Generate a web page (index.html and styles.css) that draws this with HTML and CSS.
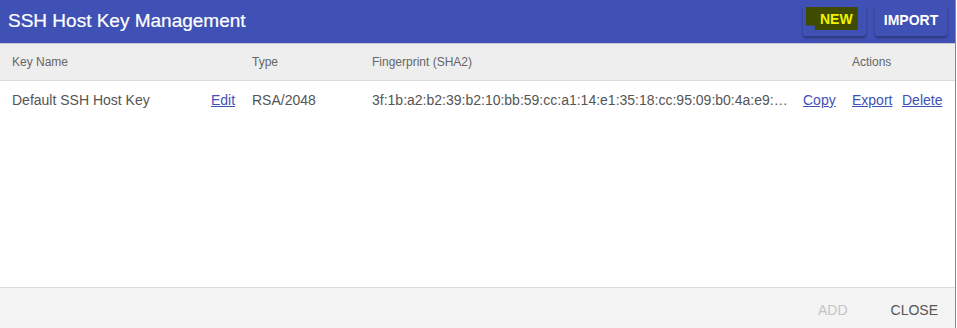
FILE: index.html
```html
<!DOCTYPE html>
<html lang="en">
<head>
    <meta charset="UTF-8">
    <title>SSH Host Key Management</title>
    <link rel="stylesheet" href="styles.css">
</head>
<body>
    <div class="dialog">
        <div class="dialog-header">
            <h1>SSH Host Key Management</h1>
            <div class="header-buttons">
                <button class="btn-new"><span class="marker">NEW</span></button>
                <button class="btn-import">IMPORT</button>
            </div>
        </div>

        <div class="dialog-body">
            <div class="row head">
                <span>Key Name</span>
                <span></span>
                <span>Type</span>
                <span>Fingerprint (SHA2)</span>
                <span></span>
                <span>Actions</span>
                <span></span>
            </div>
            <div class="row">
                <span>Default SSH Host Key</span>
                <a href="#">Edit</a>
                <span>RSA/2048</span>
                <span class="fingerprint">3f:1b:a2:b2:39:b2:10:bb:59:cc:a1:14:e1:35:18:cc:95:09:b0:4a:e9:…</span>
                <a href="#">Copy</a>
                <a href="#">Export</a>
                <a href="#">Delete</a>
            </div>
        </div>

        <div class="dialog-footer">
            <button class="flat disabled">ADD</button>
            <button class="flat">CLOSE</button>
        </div>
    </div>
</body>
</html>
```

FILE: styles.css
```css
:root {
    --primary-color: #3f51b5;
    --text-color: #555;
    --head-color: #666;
}

body {
    margin: 0;
    background: white;
    font-family: "Liberation Sans", Arial, sans-serif;
}

.dialog {
    width: 955px;
    height: 328px;
    border-right: 1px solid #8a8a8a;
    display: flex;
    flex-direction: column;
}

.dialog-header {
    height: 43px;
    background-color: var(--primary-color);
    border-bottom: 1px solid #c8c8d0;
    display: flex;
    align-items: center;
    justify-content: space-between;
    padding: 0 8px;
}

.dialog-header h1 {
    margin: 0;
    color: white;
    font-size: 19px;
    font-weight: normal;
    margin-top: -2px;
    -webkit-text-stroke: 0.2px white;
}

.header-buttons {
    display: flex;
    gap: 9px;
    margin-top: -3px;
}

.header-buttons button {
    height: 31px;
    background-color: var(--primary-color);
    color: white;
    border: none;
    border-radius: 3px;
    box-shadow: 0 2px 3px rgba(0, 0, 0, 0.35);
    font-family: inherit;
    font-size: 14px;
    font-weight: bold;
    cursor: pointer;
}

.btn-new {
    width: 63px;
    padding: 0 0 0 3px;
    display: flex;
    align-items: center;
}

.btn-import {
    width: 72px;
    padding: 0;
}

/* highlighter mark */
.marker {
    display: block;
    background-color: #3e4b00;
    color: #f2f200;
    padding: 4px 5px 3px 14px;
    margin-top: -3px;
    clip-path: polygon(0 0, 100% 0, 100% 100%, 17% 100%, 17% 80%, 0 80%);
}

.dialog-body {
    flex: 1;
}

.row {
    display: grid;
    grid-template-columns: 199px 41px 120px 431px 49px 50px 1fr;
    padding-left: 12px;
    align-items: center;
    font-size: 14px;
    color: var(--text-color);
    height: 38px;
}

.row.head {
    background-color: #eeeeee;
    border-bottom: 1px solid #dcdcdc;
    height: 36px;
    font-size: 12px;
    color: var(--head-color);
}

.row a {
    color: var(--primary-color);
}

.fingerprint {
    white-space: nowrap;
}

.dialog-footer {
    height: 40px;
    background-color: #f4f4f4;
    border-top: 1px solid #dcdcdc;
    display: flex;
    justify-content: flex-end;
    align-items: center;
    gap: 4px;
    padding-right: 8px;
}

.flat {
    background: none;
    border: none;
    font-family: inherit;
    font-size: 14px;
    color: var(--text-color);
    padding: 6px 9px;
    margin-top: 4px;
    cursor: pointer;
}

.flat.disabled {
    color: #c4c4c4;
    margin-right: 21px;
}
```
